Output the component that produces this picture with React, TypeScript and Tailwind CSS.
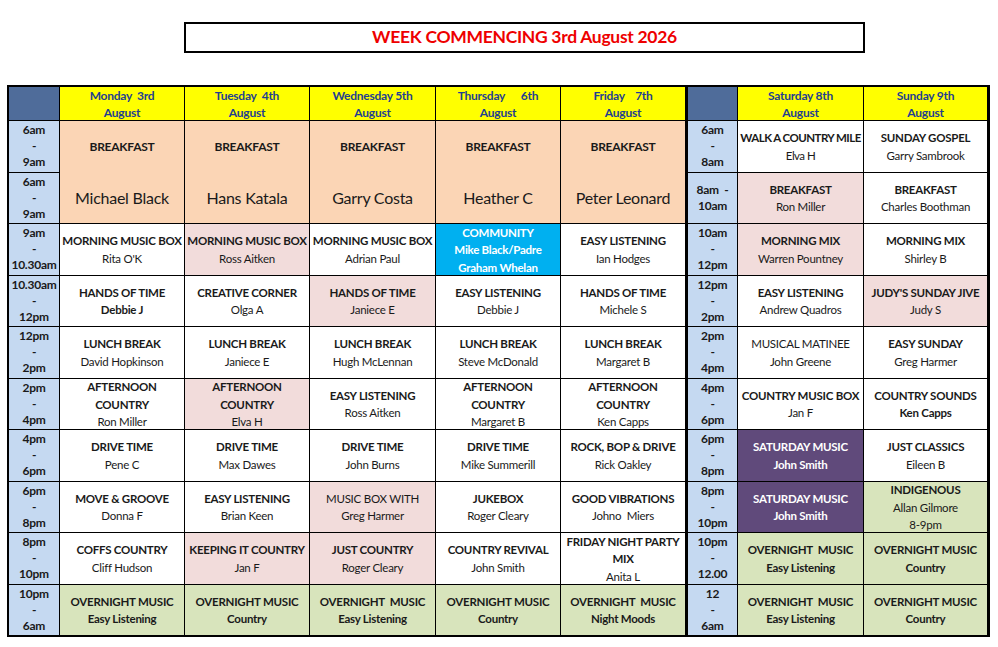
type Line = { t: string; b?: boolean; big?: boolean }
type Cell = { lines: Line[]; bg: string; span?: boolean; tight?: boolean }

const WHITE = "bg-white text-[#1a1a1a]"
const PINK = "bg-[#f2dcdb] text-[#1a1a1a]"
const PEACH = "bg-[#fbd5b5] text-[#1a1a1a]"
const CYAN = "bg-[#00b0f0] text-white"
const PURPLE = "bg-[#604a7b] text-white"
const GREEN = "bg-[#d8e4bc] text-[#1a1a1a]"

const show = (title: string, name: string, bg = WHITE, boldName = false): Cell => ({
    lines: [{ t: title, b: true }, { t: name, b: boldName }],
    bg,
})

const breakfast = (name: string): Cell => ({
    lines: [{ t: "BREAKFAST", b: true }, { t: name, big: true }],
    bg: PEACH,
    span: true,
})

const afternoon = (name: string, bg = WHITE): Cell => ({
    lines: [{ t: "AFTERNOON", b: true }, { t: "COUNTRY", b: true }, { t: name }],
    bg,
})

const overnight = (title: string, sub: string): Cell => ({
    lines: [{ t: title, b: true }, { t: sub, b: true }],
    bg: GREEN,
})

const weekdayHeads = [
    ["Monday  3rd", "August"],
    ["Tuesday  4th", "August"],
    ["Wednesday 5th", "August"],
    ["Thursday      6th", "August"],
    ["Friday    7th", "August"],
]

const weekendHeads = [
    ["Saturday 8th", "August"],
    ["Sunday 9th", "August"],
]

const weekdayTimes = [
    ["6am", "-", "9am"],
    ["6am", "-", "9am"],
    ["9am", "-", "10.30am"],
    ["10.30am", "-", "12pm"],
    ["12pm", "-", "2pm"],
    ["2pm", "-", "4pm"],
    ["4pm", "-", "6pm"],
    ["6pm", "-", "8pm"],
    ["8pm", "-", "10pm"],
    ["10pm", "-", "6am"],
]

const weekendTimes = [
    ["6am", "-", "8am"],
    ["8am  -", "10am"],
    ["10am", "-", "12pm"],
    ["12pm", "-", "2pm"],
    ["2pm", "-", "4pm"],
    ["4pm", "-", "6pm"],
    ["6pm", "-", "8pm"],
    ["8pm", "-", "10pm"],
    ["10pm", "-", "12.00"],
    ["12", "-", "6am"],
]

// rows of weekday cells, breakfast spans the first two rows
const weekdayRows: Cell[][] = [
    [
        breakfast("Michael Black"),
        breakfast("Hans Katala"),
        breakfast("Garry Costa"),
        breakfast("Heather C"),
        breakfast("Peter Leonard"),
    ],
    [],
    [
        show("MORNING MUSIC BOX", "Rita O'K"),
        show("MORNING MUSIC BOX", "Ross Aitken", PINK),
        show("MORNING MUSIC BOX", "Adrian Paul"),
        {
            lines: [
                { t: "COMMUNITY", b: true },
                { t: "Mike Black/Padre", b: true },
                { t: "Graham Whelan", b: true },
            ],
            bg: CYAN,
        },
        show("EASY LISTENING", "Ian Hodges"),
    ],
    [
        show("HANDS OF TIME", "Debbie J", WHITE, true),
        show("CREATIVE CORNER", "Olga A"),
        show("HANDS OF TIME", "Janiece E", PINK),
        show("EASY LISTENING", "Debbie J"),
        show("HANDS OF TIME", "Michele S"),
    ],
    [
        show("LUNCH BREAK", "David Hopkinson"),
        show("LUNCH BREAK", "Janiece E"),
        show("LUNCH BREAK", "Hugh McLennan"),
        show("LUNCH BREAK", "Steve McDonald"),
        show("LUNCH BREAK", "Margaret B"),
    ],
    [
        afternoon("Ron Miller"),
        afternoon("Elva H", PINK),
        show("EASY LISTENING", "Ross Aitken"),
        afternoon("Margaret B"),
        afternoon("Ken Capps"),
    ],
    [
        show("DRIVE TIME", "Pene C"),
        show("DRIVE TIME", "Max Dawes"),
        show("DRIVE TIME", "John Burns"),
        show("DRIVE TIME", "Mike Summerill"),
        show("ROCK, BOP & DRIVE", "Rick Oakley"),
    ],
    [
        show("MOVE & GROOVE", "Donna F"),
        show("EASY LISTENING", "Brian Keen"),
        { lines: [{ t: "MUSIC BOX WITH" }, { t: "Greg Harmer" }], bg: PINK },
        show("JUKEBOX", "Roger Cleary"),
        show("GOOD VIBRATIONS", "Johno  Miers"),
    ],
    [
        show("COFFS COUNTRY", "Cliff Hudson"),
        show("KEEPING IT COUNTRY", "Jan F", PINK),
        show("JUST COUNTRY", "Roger Cleary", PINK),
        show("COUNTRY REVIVAL", "John Smith"),
        {
            lines: [
                { t: "FRIDAY NIGHT PARTY", b: true },
                { t: "MIX", b: true },
                { t: "Anita L" },
            ],
            bg: WHITE,
        },
    ],
    [
        overnight("OVERNIGHT MUSIC", "Easy Listening"),
        overnight("OVERNIGHT MUSIC", "Country"),
        overnight("OVERNIGHT  MUSIC", "Easy Listening"),
        overnight("OVERNIGHT MUSIC", "Country"),
        overnight("OVERNIGHT  MUSIC", "Night Moods"),
    ],
]

const weekendRows: Cell[][] = [
    [
        { ...show("WALK A COUNTRY MILE", "Elva H"), tight: true },
        show("SUNDAY GOSPEL", "Garry Sambrook"),
    ],
    [show("BREAKFAST", "Ron Miller", PINK), show("BREAKFAST", "Charles Boothman")],
    [show("MORNING MIX", "Warren Pountney", PINK), show("MORNING MIX", "Shirley B")],
    [show("EASY LISTENING", "Andrew Quadros"), show("JUDY'S SUNDAY JIVE", "Judy S", PINK)],
    [
        { lines: [{ t: "MUSICAL MATINEE" }, { t: "John Greene" }], bg: WHITE },
        show("EASY SUNDAY", "Greg Harmer"),
    ],
    [show("COUNTRY MUSIC BOX", "Jan F"), show("COUNTRY SOUNDS", "Ken Capps", WHITE, true)],
    [
        show("SATURDAY MUSIC", "John Smith", PURPLE, true),
        show("JUST CLASSICS", "Eileen B"),
    ],
    [
        show("SATURDAY MUSIC", "John Smith", PURPLE, true),
        {
            lines: [{ t: "INDIGENOUS", b: true }, { t: "Allan Gilmore" }, { t: "8-9pm" }],
            bg: GREEN,
        },
    ],
    [
        overnight("OVERNIGHT  MUSIC", "Easy Listening"),
        overnight("OVERNIGHT MUSIC", "Country"),
    ],
    [
        overnight("OVERNIGHT  MUSIC", "Easy Listening"),
        overnight("OVERNIGHT MUSIC", "Country"),
    ],
]

function HeadCell({ lines }: { lines: string[] }) {
    return (
        <div className="bg-[#ffff00] text-[#1f3f8f] font-bold text-[12px] leading-[17px] flex flex-col items-center justify-center whitespace-pre">
            {lines.map((l, i) => (
                <span key={i}>{l}</span>
            ))}
        </div>
    )
}

function TimeCell({ lines }: { lines: string[] }) {
    return (
        <div className="bg-[#c5d9f1] text-[#1a1a1a] font-bold text-[12px] leading-[16px] flex flex-col items-center justify-center whitespace-pre">
            {lines.map((l, i) => (
                <span key={i}>{l}</span>
            ))}
        </div>
    )
}

function ShowCell({ cell }: { cell: Cell }) {
    if (cell.span) {
        return (
            <div className={`row-span-2 flex flex-col ${cell.bg}`}>
                {cell.lines.map((l, i) => (
                    <div
                        key={i}
                        className={`flex-1 flex items-center justify-center ${
                            l.big ? "text-[16px]" : "text-[12px] font-bold"
                        }`}
                    >
                        {l.t}
                    </div>
                ))}
            </div>
        )
    }
    return (
        <div
            className={`flex flex-col items-center justify-center pt-px text-center text-[11.5px] leading-[17.5px] whitespace-pre ${
                cell.tight ? "tracking-[-0.55px]" : ""
            } ${cell.bg}`}
        >
            {cell.lines.map((l, i) => (
                <span key={i} className={l.b ? "font-bold" : ""}>
                    {l.t}
                </span>
            ))}
        </div>
    )
}

function Grid({
    cols,
    heads,
    times,
    rows,
}: {
    cols: string
    heads: string[][]
    times: string[][]
    rows: Cell[][]
}) {
    return (
        <div className={`grid ${cols} grid-rows-[33px_repeat(10,50.5px)] gap-px`}>
            <div className="bg-[#4f6c9a]" />
            {heads.map((h, i) => (
                <HeadCell key={i} lines={h} />
            ))}
            {times.map((t, r) => [
                <TimeCell key={`t${r}`} lines={t} />,
                ...rows[r].map((c, i) => <ShowCell key={`c${r}-${i}`} cell={c} />),
            ])}
        </div>
    )
}

export default function App() {
    return (
        <div className="w-[998px] h-[647px] bg-white font-['Lato',sans-serif] pt-[22px]">
            <div className="ml-[184px] w-[681px] h-[31px] border-2 border-black flex items-center justify-center">
                <span className="text-[#ee0000] font-bold text-[17.5px] tracking-[-0.3px]">
                    WEEK COMMENCING 3rd August 2026
                </span>
            </div>

            <div className="mt-[32px] ml-[7px] w-fit flex gap-[3px] bg-black p-[2px] pr-[3px] tracking-[-0.25px]">
                <Grid
                    cols="grid-cols-[50px_124px_124px_125px_124px_124px]"
                    heads={weekdayHeads}
                    times={weekdayTimes}
                    rows={weekdayRows}
                />
                <Grid
                    cols="grid-cols-[49px_125px_123px]"
                    heads={weekendHeads}
                    times={weekendTimes}
                    rows={weekendRows}
                />
            </div>
        </div>
    )
}
